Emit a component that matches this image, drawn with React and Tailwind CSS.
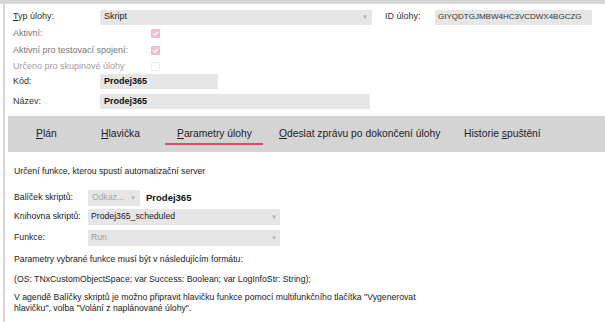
import React from "react";

const font = { fontFamily: '"Liberation Sans", Arial, sans-serif' };

const Arrow = ({ className = "" }) => (
  <span className={"text-[6px] leading-none text-[#b0b0b0] " + className}>▼</span>
);

const Check = ({ checked }) => (
  <span
    className={
      "flex h-[9px] w-[9px] items-center justify-center rounded-[1px] border " +
      (checked ? "border-[#f3b8c6] bg-[#f6c1ce]" : "border-[#ececec] bg-white")
    }
  >
    {checked && (
      <svg width="7" height="7" viewBox="0 0 8 8">
        <path d="M1.3 4.2 L3.2 6 L6.8 2" fill="none" stroke="#fff" strokeWidth="1.3" />
      </svg>
    )}
  </span>
);

const tabs = [
  { pre: "", u: "P", post: "lán", w: "w-[65px]" },
  { pre: "", u: "H", post: "lavička", w: "w-[76px]" },
  { pre: "", u: "P", post: "arametry úlohy", w: "w-[102px]", active: true },
  { pre: "", u: "O", post: "deslat zprávu po dokončení úlohy", w: "w-[185px]" },
  { pre: "Historie ", u: "s", post: "puštění", w: "w-[100px]" },
];

export default function App() {
  return (
    <div className="relative h-[322px] w-[605px] overflow-hidden bg-white text-[#333]" style={font}>
      <div className="h-[4px] bg-[#d6d6d6]" />
      <div className="ml-[3px] h-[318px] border-l-2 border-[#d6d6d6]">
        {/* form header */}
        <div className="pl-[8px] pt-[5px] text-[9px]">
          <div className="flex h-[16px] items-center">
            <span className="w-[87px]">
              <span className="underline">T</span>yp úlohy:
            </span>
            <div className="flex h-[15px] w-[272px] items-center justify-between bg-[#e6e6e6] px-[4px]">
              <span className="text-[#222]">Skript</span>
              <Arrow />
            </div>
            <span className="ml-[13px] w-[50px]">ID úlohy:</span>
            <div className="flex h-[15px] w-[157px] items-center bg-[#e6e6e6] px-[3px] text-[8px] text-[#333]">
              GIYQDTGJMBW4HC3VCDWX4BGCZG
            </div>
          </div>
          <div className="flex h-[17px] items-center text-[#777]">
            <span className="w-[138px]">Aktivní:</span>
            <Check checked />
          </div>
          <div className="flex h-[17px] items-center text-[#777]">
            <span className="w-[138px]">Aktivní pro testovací spojení:</span>
            <Check checked />
          </div>
          <div className="flex h-[15px] items-center text-[#a0a0a0]">
            <span className="w-[138px]">Určeno pro skupinové úlohy</span>
            <Check />
          </div>
          <div className="flex h-[15px] items-center">
            <span className="w-[87px]">Kód:</span>
            <div className="flex h-[15px] w-[118px] items-center bg-[#e6e6e6] px-[4px] font-bold text-[#111]">
              Prodej365
            </div>
          </div>
          <div className="mt-[5px] flex h-[15px] items-center">
            <span className="w-[87px]">Název:</span>
            <div className="flex h-[15px] w-[270px] items-center bg-[#e6e6e6] px-[4px] font-bold text-[#111]">
              Prodej365
            </div>
          </div>
        </div>

        {/* tabs */}
        <div className="ml-[3px] mt-[7px] flex h-[36px] items-stretch bg-[#d4d4d4] pl-[28px] text-[10.3px] text-[#222]">
          {tabs.map((t) => (
            <div key={t.post} className={"relative flex shrink-0 items-center " + t.w}>
              <span className="whitespace-nowrap">
                {t.pre}
                <span className="underline">{t.u}</span>
                {t.post}
              </span>
              {t.active && (
                <span className="absolute bottom-[7px] left-[-12px] h-[2px] w-[98px] bg-[#e8456a]" />
              )}
            </div>
          ))}
        </div>

        {/* content */}
        <div className="pl-[9px] text-[8.7px] text-[#222]">
          <div className="mt-[13px] h-[12px] leading-[12px]">Určení funkce, kterou spustí automatizační server</div>
          <div className="mt-[13px] flex h-[16px] items-center">
            <span className="w-[74px]">Balíček skriptů:</span>
            <div className="flex h-[16px] w-[52px] items-center justify-between bg-[#e6e6e6] px-[4px] text-[#a8a8a8]">
              <span>Odkaz...</span>
              <Arrow />
            </div>
            <span className="ml-[6px] text-[9.5px] font-bold text-[#111]">Prodej365</span>
          </div>
          <div className="mt-[3px] flex h-[16px] items-center">
            <span className="w-[74px]">Knihovna skriptů:</span>
            <div className="flex h-[16px] w-[192px] items-center justify-between bg-[#e6e6e6] px-[3px]">
              <span>Prodej365_scheduled</span>
              <Arrow />
            </div>
          </div>
          <div className="mt-[5px] flex h-[16px] items-center">
            <span className="w-[74px]">Funkce:</span>
            <div className="flex h-[16px] w-[192px] items-center justify-between bg-[#e6e6e6] px-[3px] text-[#a0a0a0]">
              <span>Run</span>
              <Arrow />
            </div>
          </div>
          <div className="mt-[7px] h-[12px] leading-[12px]">Parametry vybrané funkce musí být v následujícím formátu:</div>
          <div className="mt-[8px] h-[12px] leading-[12px]">(OS: TNxCustomObjectSpace; var Success: Boolean; var LogInfoStr: String);</div>
          <div className="mt-[7px] leading-[11px]">
            V agendě Balíčky skriptů je možno připravit hlavičku funkce pomocí multifunkčního tlačítka "Vygenerovat
            <br />
            hlavičku", volba "Volání z naplánované úlohy".
          </div>
        </div>
      </div>
    </div>
  );
}
